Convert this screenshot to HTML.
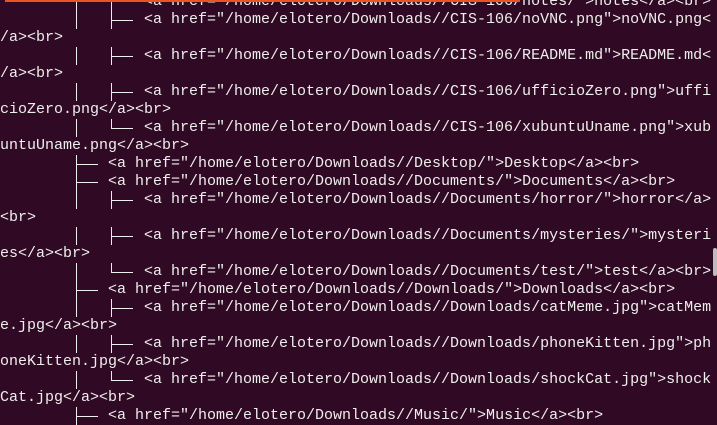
<!DOCTYPE html>
<html><head><meta charset="utf-8"><style>
html,body{margin:0;padding:0;}
body{width:717px;height:413px;background:#300a24;position:relative;overflow:hidden;font-family:"Liberation Mono","DejaVu Sans Mono",monospace;font-size:15px;color:#eeeeec;}
.t{position:absolute;white-space:pre;line-height:18px;height:18px;}
.v{position:absolute;width:1px;background:#eeeeec;}
.h{position:absolute;height:1px;background:#eeeeec;}
</style></head><body>
<div id="c"></div>
<div style="position:absolute;left:5px;top:0;width:515px;height:2px;background:#e95420"></div>
<div style="position:absolute;left:713px;top:248px;width:4px;height:28px;background:#bdbdbd;border-radius:2px"></div>
<script>
var rows=[
[2,'<a href="/home/elotero/Downloads//CIS-106/notes/">notes</a><br>','v'],
[2,'<a href="/home/elotero/Downloads//CIS-106/noVNC.png">noVNC.png<','b'],
[0,'/a><br>'],
[2,'<a href="/home/elotero/Downloads//CIS-106/README.md">README.md<','b'],
[0,'/a><br>'],
[2,'<a href="/home/elotero/Downloads//CIS-106/ufficioZero.png">uffi','b'],
[0,'cioZero.png</a><br>'],
[2,'<a href="/home/elotero/Downloads//CIS-106/xubuntuUname.png">xub','l'],
[0,'untuUname.png</a><br>'],
[1,'<a href="/home/elotero/Downloads//Desktop/">Desktop</a><br>','b'],
[1,'<a href="/home/elotero/Downloads//Documents/">Documents</a><br>','b'],
[2,'<a href="/home/elotero/Downloads//Documents/horror/">horror</a>','b'],
[0,'<br>'],
[2,'<a href="/home/elotero/Downloads//Documents/mysteries/">mysteri','b'],
[0,'es</a><br>'],
[2,'<a href="/home/elotero/Downloads//Documents/test/">test</a><br>','l'],
[1,'<a href="/home/elotero/Downloads//Downloads/">Downloads</a><br>','b'],
[2,'<a href="/home/elotero/Downloads//Downloads/catMeme.jpg">catMem','b'],
[0,'e.jpg</a><br>'],
[2,'<a href="/home/elotero/Downloads//Downloads/phoneKitten.jpg">ph','b'],
[0,'oneKitten.jpg</a><br>'],
[2,'<a href="/home/elotero/Downloads//Downloads/shockCat.jpg">shock','l'],
[0,'Cat.jpg</a><br>'],
[1,'<a href="/home/elotero/Downloads//Music/">Music</a><br>','b']
];
var h='';
rows.forEach(function(r,i){
 var top=18*i-7;
 var lv=r[0];
 var tx= lv==0?0:(lv==1?108:144);
 h+='<div class="t" style="left:'+tx+'px;top:'+top+'px">'+r[1].replace(/&/g,'&amp;').replace(/</g,'&lt;').replace(/>/g,'&gt;')+'</div>';
 if(lv==2){
  h+='<div class="v" style="left:76px;top:'+top+'px;height:18px"></div>';
  if(r[2]=='v'){h+='<div class="v" style="left:111px;top:'+top+'px;height:18px"></div>';}
  else{
   h+='<div class="v" style="left:111px;top:'+top+'px;height:'+(r[2]=='b'?18:9)+'px"></div>';
   h+='<div class="h" style="left:111px;top:'+(top+9)+'px;width:22px"></div>';
  }
 } else if(lv==1){
  h+='<div class="v" style="left:76px;top:'+top+'px;height:18px"></div>';
  h+='<div class="h" style="left:76px;top:'+(top+9)+'px;width:22px"></div>';
 }
});
document.getElementById('c').innerHTML=h;
</script>
</body></html>
